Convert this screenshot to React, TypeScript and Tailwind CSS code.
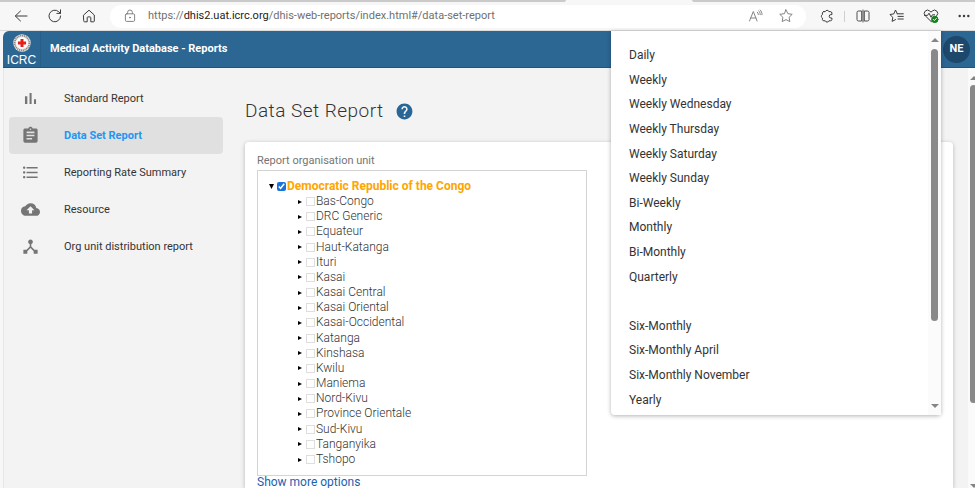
import React from "react";
import {
  MdAssignment,
  MdBackup,
  MdDeviceHub,
  MdFormatListBulleted,
  MdHelp,
} from "react-icons/md";

function ChartBars({ className }: { className?: string }) {
  return (
    <svg viewBox="0 0 24 24" className={className} fill="currentColor" aria-hidden="true">
      <path d="M5 9h3v10H5zM10.8 5h2.6v14h-2.6zM16.4 13H19v6h-2.6z" />
    </svg>
  );
}

const menu = [
  { label: "Standard Report", Icon: ChartBars },
  { label: "Data Set Report", Icon: MdAssignment, active: true },
  { label: "Reporting Rate Summary", Icon: MdFormatListBulleted },
  { label: "Resource", Icon: MdBackup },
  { label: "Org unit distribution report", Icon: MdDeviceHub },
];

const provinces = [
  "Bas-Congo", "DRC Generic", "Equateur", "Haut-Katanga", "Ituri", "Kasai",
  "Kasai Central", "Kasai Oriental", "Kasai-Occidental", "Katanga", "Kinshasa",
  "Kwilu", "Maniema", "Nord-Kivu", "Province Orientale", "Sud-Kivu",
  "Tanganyika", "Tshopo",
];

const periods = [
  "Daily", "Weekly", "Weekly Wednesday", "Weekly Thursday", "Weekly Saturday",
  "Weekly Sunday", "Bi-Weekly", "Monthly", "Bi-Monthly", "Quarterly", "",
  "Six-Monthly", "Six-Monthly April", "Six-Monthly November", "Yearly",
];

function Glyph({ children, className = "" }: { children: React.ReactNode; className?: string }) {
  return (
    <svg
      viewBox="0 0 16 16"
      className={`size-4 shrink-0 ${className}`}
      fill="none"
      stroke="currentColor"
      strokeWidth="1"
      strokeLinecap="round"
      strokeLinejoin="round"
      aria-hidden="true"
    >
      {children}
    </svg>
  );
}

function ToolButton({ label, children, className = "" }: { label: string; children: React.ReactNode; className?: string }) {
  return (
    <button type="button" aria-label={label} className={`flex shrink-0 items-center justify-center ${className}`}>
      {children}
    </button>
  );
}

const starPath =
  "M8 1.8l1.9 3.9 4.3.6-3.1 3 .7 4.3L8 11.6l-3.8 2 .7-4.3-3.1-3 4.3-.6z";

function BrowserBar() {
  return (
    <div className="shrink-0 bg-[#f7f7f7] text-[#3b3b3b]">
      <div className="flex h-[2px] justify-between">
        <div className="w-[58%] rounded-br bg-[#cacaca]" />
        <div className="w-[29%] rounded-bl bg-[#cacaca]" />
      </div>
      <div className="flex h-[29px] items-center border-b border-[#dcdcdc] pl-[13px]">
        <ToolButton label="Back">
          <Glyph><path d="M14 8H2.5M7.5 3L2.3 8l5.2 5" /></Glyph>
        </ToolButton>
        <ToolButton label="Refresh" className="ml-[18px]">
          <Glyph><path d="M13.6 8A5.8 5.8 0 1 1 11.7 3.7L13.4 5.3M13.5 1.8v3.6H9.9" /></Glyph>
        </ToolButton>
        <ToolButton label="Home" className="ml-[18px]">
          <Glyph><path d="M2.7 7L8 2.2 13.3 7v6c0 .5-.3.8-.8.8H9.8V9.6c0-.4-.3-.7-.7-.7H6.9c-.4 0-.7.3-.7.7v4.2H3.5c-.5 0-.8-.3-.8-.8z" /></Glyph>
        </ToolButton>
        <div className="ml-[13px] flex h-[23px] min-w-0 flex-1 items-center rounded-full bg-white pr-[12px] pl-[12px] text-[#858585]">
          <Glyph>
            <rect x="3.4" y="5.8" width="9.2" height="7.6" rx="1.2" />
            <path d="M5.6 5.8V4.4a2.4 2.4 0 0 1 4.8 0v1.4" />
            <circle cx="8" cy="9.6" r=".5" fill="currentColor" />
          </Glyph>
          <div className="ml-[10px] flex-1 truncate text-[11px] text-[#707070]">
            https://<span className="text-[#222]">dhis2.uat.icrc.org</span>/dhis-web-reports/index.html#/data-set-report
          </div>
          <ToolButton label="Read aloud">
            <Glyph>
              <path d="M1.5 13L5.3 3.5 9.1 13M2.7 10h5.2M9.4 4.2c.6.6.9 1.3.9 2.3M10.7 2.8c1 1 1.5 2.3 1.5 3.9M12.2 2c1.2 1.2 1.8 2.8 1.8 4.7" />
            </Glyph>
          </ToolButton>
          <ToolButton label="Add to favorites" className="ml-[14px]">
            <Glyph><path d={starPath} /></Glyph>
          </ToolButton>
        </div>
        <ToolButton label="Extensions" className="ml-[13px]">
          <Glyph>
            <path d="M4.8 3.6h1.5a1.9 1.9 0 0 1 3.6 0h1.6c.8 0 1.4.6 1.4 1.4v1.6h-1a1.7 1.7 0 0 0 0 3.4h1v1.4c0 .8-.6 1.4-1.4 1.4H9.9a1.9 1.9 0 0 1-3.6 0H4.8c-.8 0-1.4-.6-1.4-1.4V10a1.9 1.9 0 0 1 0-3.4V5c0-.8.6-1.4 1.4-1.4z" />
          </Glyph>
        </ToolButton>
        <div className="ml-[9px] h-[11px] w-px bg-[#cfcfcf]" />
        <ToolButton label="Split screen" className="ml-[10px]">
          <Glyph><path d="M6.3 3H3.4C2.6 3 2 3.6 2 4.4v7.2c0 .8.6 1.4 1.4 1.4h2.9zM9.7 3h2.9c.8 0 1.4.6 1.4 1.4v7.2c0 .8-.6 1.4-1.4 1.4H9.7zM8 2v12" strokeWidth=".9" /></Glyph>
        </ToolButton>
        <ToolButton label="Favorites" className="ml-[18px]">
          <Glyph>
            <path d="M8.3 5.8L6.5 2 4.8 5.9l-3.9.6 2.9 2.8-.7 4.1 3.4-1.8M8.3 5.8h6M9 8.4h5.3M9 11h5.3" />
          </Glyph>
        </ToolButton>
        <ToolButton label="Browser essentials" className="ml-[18px]">
          <Glyph>
            <path d="M8 13.4L2.2 7.7a3.3 3.3 0 0 1 0-4.6 3.3 3.3 0 0 1 4.6 0L8 4.2l1.2-1.1a3.3 3.3 0 0 1 4.6 0 3.3 3.3 0 0 1 0 4.6zM1.5 7.4h3L6 5.2l2 4 1.4-2.4h2.2" />
            <circle cx="11.8" cy="11.4" r="3.2" fill="#15811c" stroke="#15811c" />
            <path d="M10.4 11.5l1 1 1.9-2" stroke="white" />
          </Glyph>
        </ToolButton>
        <ToolButton label="Settings and more" className="mr-[3px] ml-[17px]">
          <Glyph>
            <g fill="currentColor" stroke="none">
              <circle cx="3.7" cy="8" r="1.2" />
              <circle cx="8" cy="8" r="1.2" />
              <circle cx="12.3" cy="8" r="1.2" />
            </g>
          </Glyph>
        </ToolButton>
      </div>
    </div>
  );
}

function Header() {
  return (
    <header className="flex h-[37px] shrink-0 items-center rounded-tl-md border-b border-[#1f5380] bg-[#2c6693] text-white">
      <div className="flex h-full w-[38px] flex-col items-center border-r border-[#285f8a] pt-[3px]">
        <svg viewBox="0 0 18 18" className="size-[18px] shrink-0" aria-hidden="true">
          <circle cx="9" cy="9" r="8.7" fill="#ece9e6" />
          <circle cx="9" cy="9" r="7.3" fill="none" stroke="#8b8783" strokeWidth="1.7" strokeDasharray="1.2 .7" />
          <circle cx="9" cy="9" r="5.8" fill="white" />
          <path d="M7.5 4.9h3v2.6h2.6v3h-2.6v2.6h-3v-2.6H4.9v-3h2.6z" fill="#e3211c" />
        </svg>
        <span className="pt-px font-['Liberation_Sans',sans-serif] text-[12px] leading-[14px]">ICRC</span>
      </div>
      <h1 className="ml-[9px] flex-1 pt-px text-[11px] font-bold">Medical Activity Database - Reports</h1>
      <button type="button" className="mr-[5px] flex size-[27px] items-center justify-center rounded-full bg-[#1d476b] pt-px text-[11px] font-bold">
        NE
      </button>
    </header>
  );
}

function Sidebar() {
  return (
    <nav className="w-[242px] shrink-0 border-l border-[#e6e6e6] pt-[12px] pr-[22px] pl-[5px]">
      {menu.map(({ label, Icon, active }) => (
        <a
          key={label}
          href="#"
          className={`flex h-[37px] items-center rounded pl-[12px] text-[11px] ${
            active ? "bg-[#e0e0e0] font-bold text-[#2196f3]" : "text-[#333]"
          }`}
        >
          <span className="flex w-[43px]">
            <Icon className="size-[19px] text-[#757575]" />
          </span>
          <span className="pt-px">{label}</span>
        </a>
      ))}
    </nav>
  );
}

function Arrow({ className }: { className: string }) {
  return (
    <svg viewBox="0 0 8 8" className={className} aria-hidden="true">
      <path d="M0 0l8 4L0 8z" fill="currentColor" />
    </svg>
  );
}

function OrgUnitTree() {
  return (
    <div className="flex h-[306px] w-[330px] flex-col border border-[#d4d4d4] pt-[7px] pb-[8px] text-[12px]">
      <label className="ml-[11px] flex h-[16px] items-center font-bold text-[#ffa500]">
        <Arrow className="size-[5px] rotate-90 text-black" />
        <input type="checkbox" defaultChecked className="mr-px ml-[3px] size-[9px] accent-[#1a73d9]" />
        Democratic Republic of the Congo
      </label>
      <ul className="ml-[40px] flex min-h-0 flex-1 flex-col">
        {provinces.map((name) => (
          <li key={name} className="flex min-h-0 flex-1 items-center">
            <label className="flex items-center leading-[15px] font-light text-[#333]">
              <Arrow className="size-[4px] text-black" />
              <input type="checkbox" className="mr-px ml-[4px] size-[9px] appearance-none border border-[#dedede] bg-white" />
              {name}
            </label>
          </li>
        ))}
      </ul>
    </div>
  );
}

function Triangle({ down = false }: { down?: boolean }) {
  return (
    <svg viewBox="0 0 8 4" className={`h-[4px] w-[8px] shrink-0 ${down ? "rotate-180" : ""}`} aria-hidden="true">
      <path d="M0 4l4-4 4 4z" fill="#858585" />
    </svg>
  );
}

function PeriodMenu() {
  return (
    <div className="absolute top-[31px] right-[34px] flex h-[384px] w-[330px] rounded-b-sm bg-white shadow-[0_1px_4px_rgba(0,0,0,0.3)]">
      <ul role="listbox" aria-label="Period type" className="flex flex-1 flex-col pt-[12px] pb-[3px]">
        {periods.map((period, i) => (
          <li key={i} role="option" aria-selected={false} className="flex min-h-0 flex-1 items-center pl-[18px] text-[12px] text-[#333]">
            {period}
          </li>
        ))}
      </ul>
      <div className="flex w-[13px] flex-col items-center bg-[#fbfbfb] pt-[7px] pb-[7px]">
        <Triangle />
        <div className="mt-[7px] h-[272px] w-[7px] rounded-full bg-[#898989]" />
        <div className="flex-1" />
        <Triangle down />
      </div>
    </div>
  );
}

export default function App() {
  return (
    <div className="relative flex h-screen flex-col overflow-hidden bg-[#f7f7f7] font-[Roboto,sans-serif]">
      <BrowserBar />
      <div className="ml-[3px] flex min-h-0 flex-1 flex-col">
        <Header />
        <div className="flex min-h-0 flex-1 bg-[#f3f3f3]">
          <Sidebar />
          <main className="flex min-w-0 flex-1 flex-col">
            <div className="flex h-[74px] shrink-0 items-center gap-[11px] pt-[12px]">
              <h2 className="text-[19px] font-light tracking-wide text-[#333]">Data Set Report</h2>
              <button type="button" aria-label="Help">
                <MdHelp className="size-[19px] text-[#276696]" />
              </button>
            </div>
            <section className="mr-[15px] flex-1 rounded-t-sm bg-white pt-[11px] pl-[12px] shadow-[0_1px_4px_rgba(0,0,0,0.25)]">
              <h3 className="mb-[2px] text-[11px] leading-[15px] text-[#757575]">Report organisation unit</h3>
              <OrgUnitTree />
              <button type="button" className="block text-[12px] leading-[12px] text-[#1b5fb0]">
                Show more options
              </button>
            </section>
          </main>
          <div className="flex w-[7px] shrink-0 flex-col overflow-hidden bg-[#fafafa] pt-[8px] pl-[2px]">
            <Triangle />
            <div className="mt-[5px] h-[318px] w-[7px] rounded-full bg-[#898989]" />
            <div className="flex-1" />
            <Triangle down />
          </div>
        </div>
      </div>
      <PeriodMenu />
    </div>
  );
}
